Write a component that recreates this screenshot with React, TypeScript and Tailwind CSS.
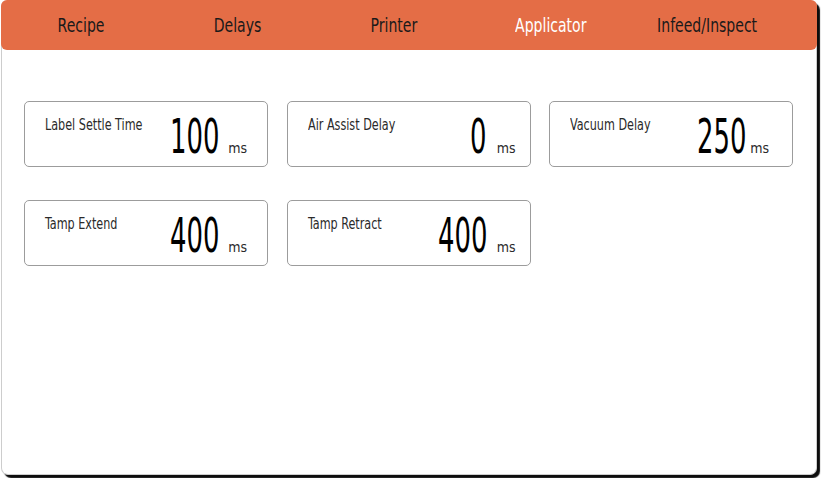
import React from "react";

const tabs = ["Recipe", "Delays", "Printer", "Applicator", "Infeed/Inspect"];

type Item = { label: string; value: string; pr: string; gap: string };

const items: Item[] = [
  { label: "Label Settle Time", value: "100", pr: "pr-[20px]", gap: "ml-[9px]" },
  { label: "Air Assist Delay", value: "0", pr: "pr-[14px]", gap: "ml-[10px]" },
  { label: "Vacuum Delay", value: "250", pr: "pr-[23px]", gap: "ml-[4px]" },
  { label: "Tamp Extend", value: "400", pr: "pr-[20px]", gap: "ml-[9px]" },
  { label: "Tamp Retract", value: "400", pr: "pr-[14px]", gap: "ml-[9px]" },
];

const font = { fontFamily: '"DejaVu Sans Condensed", "DejaVu Sans", sans-serif', fontStretch: "condensed" as const };

export default function App() {
  return (
    <div className="w-[822px] h-[478px] bg-white" style={font}>
      <div className="ml-[1px] w-[816px] h-[475px] rounded-[7px] border-x border-b border-[#cdcdcd] bg-white shadow-[3px_3px_1px_rgba(0,0,0,0.95)] flex flex-col">
        <div className="h-[50px] -mx-[1px] rounded-[6px] bg-[#e46d46] grid grid-cols-[156.5px_156.5px_156.5px_156.5px_156.5px] pl-[2px] items-center">
          {tabs.map((t) => (
            <div key={t} className="flex justify-center">
              <span
                className={
                  t === "Applicator"
                    ? "inline-block whitespace-nowrap scale-x-[0.78] text-[20px] leading-none text-white pb-[1px]"
                    : "inline-block whitespace-nowrap scale-x-[0.78] text-[20px] leading-none text-[#1a1a1a] pb-[1px]"
                }
              >
                {t}
              </span>
            </div>
          ))}
        </div>
        <div className="pt-[51px] pl-[22px] grid grid-cols-[244px_244px_244px] gap-x-[18.5px] gap-y-[33px]">
          {items.map((it, i) => (
            <div
              key={i}
              className={`h-[66px] rounded-[5px] border border-[#9c9c9c] flex justify-between ${it.pr}`}
            >
              <div className="flex-1 min-w-0 flex items-start pl-[20px] pt-[16px]">
                <span className="block whitespace-nowrap origin-left scale-x-[0.83] text-[15px] leading-none text-[#2a2a2a]">
                  {it.label}
                </span>
              </div>
              <div className="shrink-0 flex items-baseline pt-[10px]">
                <span className="inline-block origin-right scale-x-[0.6] text-[48px] leading-none text-black">
                  {it.value}
                </span>
                <span className={`inline-block text-[14px] leading-none text-[#2a2a2a] ${it.gap}`}>ms</span>
              </div>
            </div>
          ))}
        </div>
      </div>
    </div>
  );
}
